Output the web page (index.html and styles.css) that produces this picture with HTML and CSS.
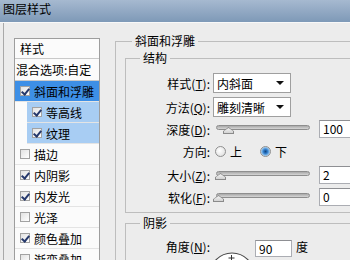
FILE: index.html
```html
<!DOCTYPE html>
<html>
  <head>
    <title>图层样式</title>
    <link rel="stylesheet" href="styles.css">
  </head>
  <body>
    <div id="dialog">
      <div class="titlebar">图层样式</div>
      <div class="main">
        <div class="side">
          <div class="list">
            <div class="list-head">样式</div>
            <div class="list-blend">混合选项:自定</div>
            <div class="item selected"><span class="check on"></span>斜面和浮雕</div>
            <div class="item sub"><span class="check on"></span>等高线</div>
            <div class="item sub"><span class="check on"></span>纹理</div>
            <div class="item"><span class="check"></span>描边</div>
            <div class="item"><span class="check on"></span>内阴影</div>
            <div class="item"><span class="check on"></span>内发光</div>
            <div class="item"><span class="check"></span>光泽</div>
            <div class="item"><span class="check on"></span>颜色叠加</div>
            <div class="item"><span class="check"></span>渐变叠加</div>
          </div>
        </div>
        <div class="panel">
          <fieldset class="group outer">
            <legend>斜面和浮雕</legend>
            <fieldset class="group inner">
              <legend>结构</legend>
              <div class="form">
                <label>样式(<u>T</u>):</label>
                <div class="select"><span>内斜面</span><span class="arrow"></span></div>

                <label>方法(<u>Q</u>):</label>
                <div class="select"><span>雕刻清晰</span><span class="arrow"></span></div>

                <label>深度(<u>D</u>):</label>
                <div class="slider-row">
                  <div class="slider">
                    <div class="track"></div>
                    <span class="thumb" style="left: 10px"></span>
                  </div>
                  <div class="num">100</div>
                </div>

                <label>方向:</label>
                <div class="radios">
                  <span class="radio"></span><span class="radio-text">上</span>
                  <span class="radio on"></span><span class="radio-text">下</span>
                </div>

                <label>大小(<u>Z</u>):</label>
                <div class="slider-row">
                  <div class="slider">
                    <div class="track"></div>
                    <span class="thumb" style="left: 2px"></span>
                  </div>
                  <div class="num">2</div>
                </div>

                <label>软化(<u>F</u>):</label>
                <div class="slider-row">
                  <div class="slider">
                    <div class="track"></div>
                    <span class="thumb" style="left: 0px"></span>
                  </div>
                  <div class="num">0</div>
                </div>
              </div>
            </fieldset>
            <fieldset class="group inner">
              <legend>阴影</legend>
              <div class="angle-row">
                <label>角度(<u>N</u>):</label>
                <svg class="dial" width="46" height="46" viewBox="0 0 46 46">
                  <circle cx="23" cy="23" r="22" fill="#fff" stroke="#4a4a4a" stroke-width="1.2"/>
                  <path d="M22.5 3v6M19.5 6h6" stroke="#333" stroke-width="1"/>
                </svg>
                <div class="num angle">90</div>
                <span class="unit">度</span>
              </div>
            </fieldset>
          </fieldset>
        </div>
      </div>
    </div>
  </body>
</html>
```

FILE: styles.css
```css
body {
  margin: 0;
  font-family: "Noto Sans CJK SC", "DejaVu Sans", sans-serif;
  font-size: 12px;
  color: #000;
  background: #ececec;
}

#dialog {
  width: 350px;
  height: 260px;
  overflow: hidden;
  background: #ececec;
}

.titlebar {
  height: 22px;
  line-height: 18px;
  padding-left: 3px;
  box-sizing: border-box;
  background: linear-gradient(#a6b9d0, #7e99b7);
}

.main {
  display: flex;
  height: 238px;
  border-top: 1px solid #f8f8f8;
}

.side {
  flex: none;
  width: 112px;
  margin-left: 3px;
  border-left: 1px solid #a9a9a9;
  padding: 15px 0 0 10px;
  box-sizing: border-box;
}

.list {
  width: 86px;
  height: 240px;
  box-sizing: border-box;
  border: 1px solid #9d9d9d;
  background: #fbfbfb;
}

.list-head {
  height: 19px;
  line-height: 19px;
  padding-left: 5px;
  border-bottom: 1px solid #c9c9c9;
}

.list-blend {
  height: 21px;
  line-height: 21px;
  padding-left: 1px;
  border-bottom: 1px solid #c9c9c9;
  white-space: nowrap;
}

.item {
  display: flex;
  align-items: center;
  height: 20px;
  padding-left: 5px;
  border-bottom: 1px solid #e4e4e4;
}

.item.selected {
  background: #3d8fe6;
}

.item.sub {
  margin-left: 12px;
  background: #a8cdf3;
}

.check {
  flex: none;
  width: 10px;
  height: 10px;
  margin-right: 4px;
  box-sizing: border-box;
  border: 1px solid #a2a2a2;
  background: linear-gradient(135deg, #e2e2e2, #ffffff);
  position: relative;
}

.check.on::after {
  content: "";
  position: absolute;
  left: 2px;
  top: 0px;
  width: 3px;
  height: 6px;
  border-right: 2px solid #25386b;
  border-bottom: 2px solid #25386b;
  transform: rotate(40deg);
}

.panel {
  padding-top: 11px;
}

.group {
  margin: 0;
  padding: 0;
  border: 1px solid #bdbdbd;
  min-width: 0;
}

.group legend {
  padding: 0 3px;
  line-height: 14px;
}

.outer {
  width: 300px;
  height: 260px;
  padding-left: 9px;
}

.outer > legend {
  margin-left: 7px;
}

.inner {
  margin-top: 3px;
  padding: 6px 0 4px 0;
}

.inner > legend {
  margin-left: 14px;
}

.form {
  display: grid;
  grid-template-columns: 84px 1fr;
  grid-template-rows: 24px 24px 20px 25px 22px 22px;
  column-gap: 3px;
  align-items: center;
}

.form label,
.angle-row label {
  text-align: right;
  white-space: nowrap;
}

.select {
  width: 78px;
  height: 20px;
  box-sizing: border-box;
  border: 1px solid #9f9f9f;
  background: #fff;
  display: flex;
  align-items: center;
  justify-content: space-between;
  padding: 0 6px 0 3px;
}

.arrow {
  width: 0;
  height: 0;
  border-left: 4px solid transparent;
  border-right: 4px solid transparent;
  border-top: 4px solid #111;
}

.slider-row {
  display: flex;
  align-items: center;
}

.slider {
  position: relative;
  width: 97px;
  height: 12px;
}

.track {
  margin: 2px 0 0 3px;
  height: 5px;
  box-sizing: border-box;
  border: 1px solid #8e8e8e;
  border-radius: 3px;
  background: linear-gradient(#a9a9a9, #d6d6d6);
}

.thumb {
  position: absolute;
  top: 4px;
  width: 11px;
  height: 7px;
  background: #8a8a8a;
  clip-path: polygon(50% 0, 100% 60%, 100% 100%, 0 100%, 0 60%);
}

.thumb::after {
  content: "";
  position: absolute;
  left: 1px;
  top: 1px;
  right: 1px;
  bottom: 1px;
  background: linear-gradient(#f4f4f4, #d2d2d2);
  clip-path: polygon(50% 0, 100% 60%, 100% 100%, 0 100%, 0 60%);
}

.num {
  width: 40px;
  height: 18px;
  line-height: 16px;
  box-sizing: border-box;
  margin-left: 9px;
  padding-left: 3px;
  border: 1px solid #abadb3;
  border-top-color: #8e8f93;
  background: #fff;
}

.radios {
  display: flex;
  align-items: center;
}

.radio {
  width: 11px;
  height: 11px;
  margin-left: 2px;
  box-sizing: border-box;
  border: 1px solid #8f8f8f;
  border-radius: 50%;
  background: radial-gradient(circle at 40% 40%, #ffffff, #d9d9d9);
}

.radio.on {
  margin-left: 18px;
  background: radial-gradient(circle, #12467e 0, #2d7ac9 2px, #8fc2ee 4px, #e8e8e8 5px);
}

.radio-text {
  margin-left: 4px;
}

.angle-row {
  display: flex;
  align-items: flex-start;
  height: 22px;
}

.angle-row label {
  width: 84px;
  line-height: 22px;
}

.dial {
  flex: none;
  margin: 16px 0 0 -1px;
}

.num.angle {
  width: 37px;
  height: 17px;
  margin: 4px 0 0 0;
}

.unit {
  margin-left: 4px;
  line-height: 22px;
}
```
